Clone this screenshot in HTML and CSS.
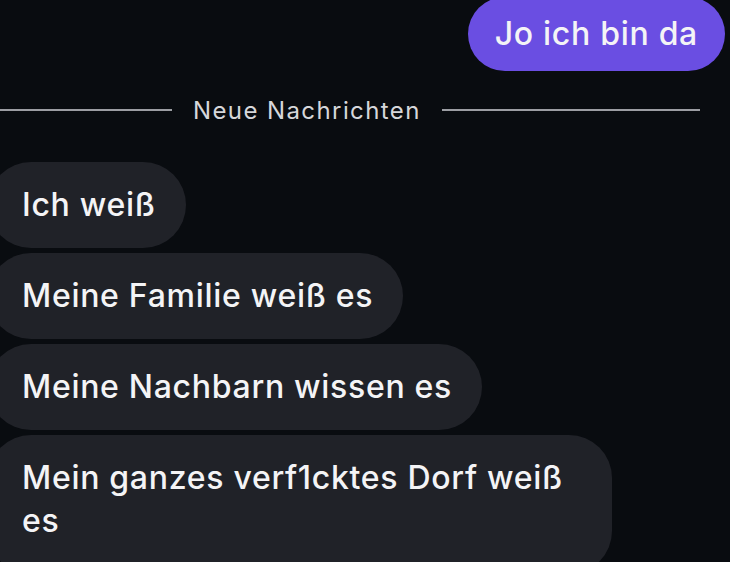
FILE: index.html
```html
<!DOCTYPE html>
<html lang="de">
<head>
<meta charset="utf-8">
<link rel="stylesheet" href="styles.css">
</head>
<body>
<div class="chat">
  <div class="bubble out">Jo ich bin da</div>
  <div class="divider">
    <span class="line left"></span>
    <span class="label">Neue Nachrichten</span>
    <span class="line right"></span>
  </div>
  <div class="bubble in">Ich weiß</div>
  <div class="bubble in">Meine Familie weiß es</div>
  <div class="bubble in">Meine Nachbarn wissen es</div>
  <div class="bubble in wide">Mein ganzes verf1cktes Dorf weiß es</div>
</div>
</body>
</html>
```

FILE: styles.css
```css
html, body {
  margin: 0;
  padding: 0;
  background: #090c10;
  height: 100%;
  overflow: hidden;
}
.chat {
  display: flex;
  flex-direction: column;
  margin-top: -3px;
  font-family: Inter, "Noto Sans", sans-serif;
  color: #f4f4f6;
}
.bubble {
  font-size: 32px;
  font-weight: 500;
  letter-spacing: 0.7px;
  line-height: 43px;
}
.out {
  align-self: flex-end;
  margin-right: 5px;
  background: #6a4ee2;
  padding: 15px 27px 16px;
  border-radius: 37px;
}
.divider {
  display: flex;
  align-items: center;
  margin-top: 25px;
  height: 28px;
  margin-bottom: 38px;
}
.line {
  height: 2px;
  background: #9c9ea3;
}
.line.left { width: 172px; }
.line.right { flex: 1; margin-right: 30px; }
.label {
  margin: 0 21px;
  font-size: 24px;
  letter-spacing: 1.4px;
  color: #d6d7da;
  font-weight: 400;
}
.in {
  align-self: flex-start;
  box-sizing: border-box;
  background: #202228;
  margin-left: -12px;
  padding: 21px 30px 22px 34px;
  border-radius: 43px;
  margin-bottom: 5px;
}
.wide {
  max-width: 624px;
  padding-right: 28px;
  padding-bottom: 32px;
  margin-bottom: 0;
}
```
